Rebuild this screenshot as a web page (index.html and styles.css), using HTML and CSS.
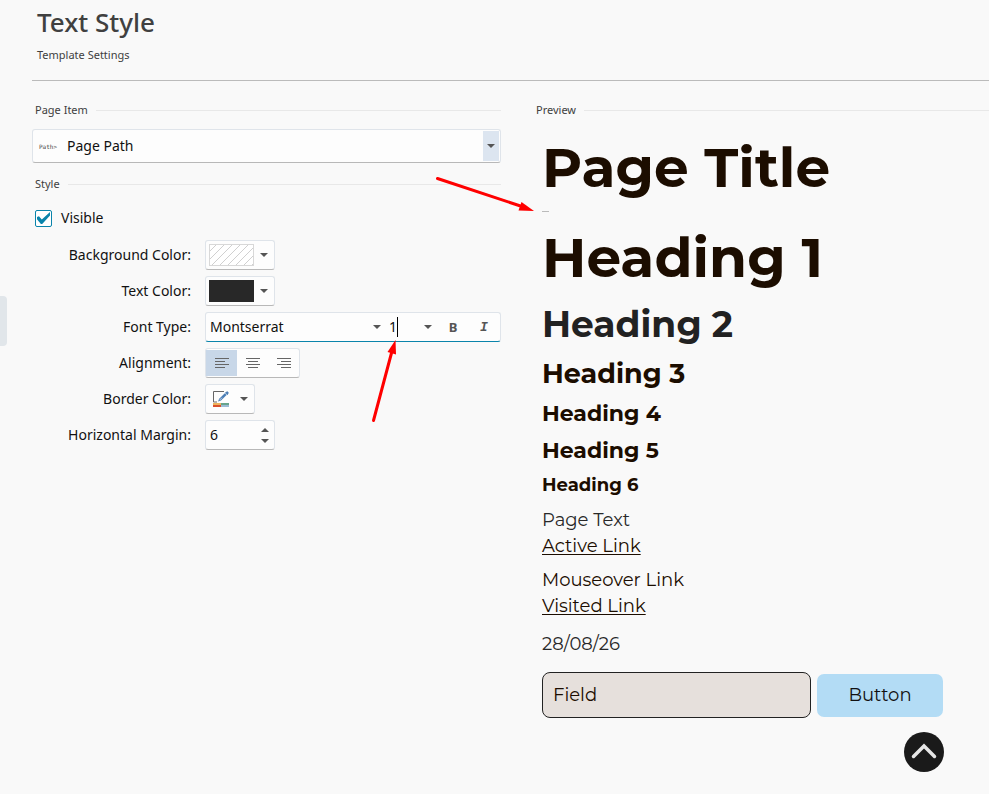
FILE: index.html
```html
<!DOCTYPE html>
<html lang="en">
<head>
    <meta charset="UTF-8">
    <meta name="viewport" content="width=device-width, initial-scale=1.0">
    <title>Text Style</title>
    <link rel="stylesheet" href="styles.css">
</head>
<body>
<button class="drawer-handle" type="button" aria-label="Open side panel"></button>
<header>
    <h1>Text Style</h1>
    <p>Template Settings</p>
</header>
<div class="container">
    <form class="settings">
        <h2 class="group-title"><label for="page-item">Page Item</label></h2>
        <div class="page-item">
            <span class="path-icon" aria-hidden="true">Path&gt;</span>
            <select id="page-item">
                <option>Page Path</option>
            </select>
            <span class="drop"><i class="caret"></i></span>
        </div>

        <h2 class="group-title">Style</h2>
        <label class="visible"><input type="checkbox" checked>Visible</label>

        <div class="fields">
            <label for="bg-color">Background Color:</label>
            <button id="bg-color" class="control color-button" type="button">
                <svg class="swatch" width="45" height="22" viewBox="0 0 45 22">
                    <defs>
                        <pattern id="hatch" width="8" height="8" patternUnits="userSpaceOnUse">
                            <path d="M-1 9L9 -1M-1 1L1 -1M7 9L9 7" stroke="#d0d0d0" stroke-width="1"/>
                        </pattern>
                    </defs>
                    <rect x="0.5" y="0.5" width="44" height="21" fill="#fff"/>
                    <rect x="0.5" y="0.5" width="44" height="21" fill="url(#hatch)" stroke="#d8d8d8"/>
                </svg>
                <i class="caret"></i>
            </button>

            <label for="text-color">Text Color:</label>
            <button id="text-color" class="control color-button" type="button">
                <span class="swatch dark"></span>
                <i class="caret"></i>
            </button>

            <label for="font-name">Font Type:</label>
            <div class="control font-box">
                <select id="font-name">
                    <option>Montserrat</option>
                </select>
                <i class="caret"></i>
                <span class="size-box">
                    <input id="font-size" type="text" value="1" aria-label="Font size">
                    <span class="cursor"></span>
                </span>
                <button class="sizes" type="button" aria-label="Font sizes"><i class="caret"></i></button>
                <button class="bold" type="button">B</button>
                <button class="italic" type="button">I</button>
            </div>

            <label for="align-left">Alignment:</label>
            <div class="control align-box">
                <button id="align-left" class="active" type="button" aria-label="Left">
                    <svg width="14" height="11"><path d="M0 .5H14M0 3.5H10M0 6.5H14M0 9.5H10"/></svg>
                </button>
                <button type="button" aria-label="Center">
                    <svg width="14" height="11"><path d="M0 .5H14M2 3.5H12M0 6.5H14M2 9.5H12"/></svg>
                </button>
                <button type="button" aria-label="Right">
                    <svg width="14" height="11"><path d="M0 .5H14M4 3.5H14M0 6.5H14M4 9.5H14"/></svg>
                </button>
            </div>

            <label for="border-color">Border Color:</label>
            <button id="border-color" class="control border-button" type="button">
                <svg width="17" height="17" viewBox="0 0 17 17">
                    <path d="M11 .5H.5V11H4" fill="none" stroke="#666"/>
                    <path d="M5 10.5L6.2 7.8L11.8 2.2L13.6 4L8 9.6Z" fill="#4a7db5"/>
                    <path d="M12.6 1.9L13.4 1H15V2.8L14.1 3.6Z" fill="#4a7db5" stroke="#4a7db5"/>
                    <path d="M6.5 9.2L9 6.7" stroke="#b8d0ea"/>
                    <rect y="12" width="8" height="2" fill="#edb35c"/>
                    <rect x="8" y="12" width="8" height="2" fill="#67a48d"/>
                    <rect y="14" width="8" height="2" fill="#d9502c"/>
                    <rect x="8" y="14" width="8" height="2" fill="#9bbbd3"/>
                </svg>
                <i class="caret"></i>
            </button>

            <label for="margin">Horizontal Margin:</label>
            <div class="control spin-box">
                <input id="margin" type="text" inputmode="numeric" value="6">
                <div class="spin">
                    <button type="button" aria-label="Increase"><i class="caret up"></i></button>
                    <button type="button" aria-label="Decrease"><i class="caret"></i></button>
                </div>
            </div>
        </div>
    </form>

    <section class="preview">
        <h2 class="group-title">Preview</h2>
        <div class="sample">
            <p class="page-title">Page Title</p>
            <div class="page-path"></div>
            <h1>Heading 1</h1>
            <h2>Heading 2</h2>
            <h3>Heading 3</h3>
            <h4>Heading 4</h4>
            <h5>Heading 5</h5>
            <h6>Heading 6</h6>
            <p class="text">Page Text</p>
            <p><a href="#">Active Link</a></p>
            <p class="spaced"><a class="hover" href="#">Mouseover Link</a></p>
            <p><a href="#">Visited Link</a></p>
            <p class="date">28/08/26</p>
            <div class="form-row">
                <input type="text" value="Field" aria-label="Field">
                <button type="button">Button</button>
            </div>
            <button class="to-top" type="button" aria-label="Back to top">
                <svg width="40" height="40"><path d="M9.500 24.500L20 14L30.500 24.500" fill="none" stroke="#e6e6e6" stroke-width="3.500" stroke-linecap="round"/></svg>
            </button>
        </div>
    </section>
</div>

<!-- red pointer arrows -->
<svg class="arrows" width="540" height="430" viewBox="0 0 540 430">
    <g stroke="#f00" stroke-width="3" stroke-linecap="round">
        <path d="M437.500 178.500L522 206.500"/>
        <path d="M373.500 420.500L391.500 353"/>
    </g>
    <g fill="#f00">
        <path d="M534 211L518.500 210.500L521.500 202Z"/>
        <path d="M395.500 340L396 354.500L387.500 352Z"/>
    </g>
</svg>
</body>
</html>
```
FILE: styles.css
```css
* {
    box-sizing: border-box;
}

body {
    margin: 0;
    min-height: 100vh;
    position: relative;
    overflow-x: hidden;
    background-color: #f9f9f9;
    color: #111;
    font-family: "Segoe UI", "Noto Sans", sans-serif;
    font-size: 14px;
}

h1, h2, h3, h4, h5, h6, p {
    margin: 0;
}

button, input, select {
    font: inherit;
    color: inherit;
    margin: 0;
    padding: 0;
    border: none;
    background: none;
    outline: none;
    appearance: none;
}

.drawer-handle {
    position: absolute;
    left: 0;
    top: 296px;
    width: 7px;
    height: 50px;
    background-color: #e1e6ea;
    border-radius: 0 4px 4px 0;
}

header {
    margin-left: 32px;
    padding: 4px 5px 16px;
    border-bottom: 1px solid #bbb;
    color: #404040;
}

header h1 {
    font-size: 26px;
    font-weight: 500;
    line-height: 36px;
}

header p {
    margin-top: 6px;
    font-size: 11px;
    line-height: 18px;
}

.container {
    display: grid;
    grid-template-columns: 469px 1fr;
    column-gap: 35px;
    padding: 20px 0 0 32px;
}

.group-title {
    display: flex;
    align-items: center;
    gap: 8px;
    font-size: 11px;
    font-weight: 400;
    line-height: 18px;
    color: #404040;
}

.group-title::after {
    content: "";
    flex: 1;
    height: 1px;
    background-color: #e8e8e8;
}

.settings .group-title {
    padding-left: 3px;
}

.caret {
    flex: none;
    width: 0;
    height: 0;
    border-left: 4px solid transparent;
    border-right: 4px solid transparent;
    border-top: 4px solid #555;
}

.caret.up {
    border-top: none;
    border-bottom: 4px solid #555;
}

.control,
.page-item {
    display: flex;
    align-items: center;
    height: 30px;
    background-color: #fdfdfd;
    border: 1px solid #dfe4ea;
    border-bottom-color: #b8b8b8;
    border-radius: 3px;
}

/* page item */
.page-item {
    height: 34px;
    margin: 10px 0 12px;
    padding: 1px;
    position: relative;
}

.path-icon {
    position: absolute;
    left: 6px;
    font-family: "DejaVu Sans Mono", monospace;
    font-size: 6px;
    color: #444;
}

.page-item select {
    flex: 1;
    height: 100%;
    padding: 0 0 2px 33px;
}

.drop {
    display: flex;
    align-items: center;
    justify-content: center;
    width: 16px;
    height: 100%;
    background-color: #dce5f0;
    pointer-events: none;
}

.visible {
    display: flex;
    align-items: center;
    gap: 9px;
    width: max-content;
    margin: 13px 0 10px 3px;
    line-height: 24px;
}

.visible input {
    display: grid;
    place-items: center;
    width: 17px;
    height: 17px;
    border: 1px solid #0a84ab;
    border-radius: 2px;
    background-color: #fff;
}

.visible input:checked::before {
    content: "";
    width: 13px;
    height: 12px;
    background-color: #0a84ab;
    clip-path: polygon(0 42%, 15% 36%, 37% 62%, 100% 0, 100% 30%, 40% 100%, 30% 100%, 0 60%);
}

/* label / control rows */
.fields {
    display: grid;
    grid-template-columns: 159px 1fr;
    column-gap: 14px;
    row-gap: 6px;
    align-items: center;
    justify-items: start;
}

.fields > label {
    justify-self: end;
    padding-bottom: 2px;
}

.color-button {
    width: 70px;
    padding-left: 3px;
    gap: 6px;
}

.swatch {
    width: 45px;
    height: 22px;
}

.swatch.dark {
    background-color: #282828;
}

.font-box {
    width: 100%;
    border-bottom-color: #0a84ab;
}

.font-box select {
    flex: 1;
    min-width: 0;
    height: 100%;
    padding: 0 0 2px 4px;
}

.size-box {
    display: flex;
    align-items: center;
    width: 37px;
    padding-left: 8px;
    position: relative;
}

.size-box input {
    width: 100%;
    padding-bottom: 2px;
}

.cursor {
    position: absolute;
    left: 16px;
    width: 1px;
    height: 20px;
    background-color: #000;
}

.font-box button {
    display: flex;
    align-items: center;
    justify-content: center;
    height: 100%;
    color: #555;
    font-size: 13px;
}

.font-box .sizes {
    width: 20px;
}

.font-box .bold {
    width: 30px;
    font-weight: 700;
}

.font-box .italic {
    width: 32px;
    font-family: "Liberation Mono", monospace;
    font-style: italic;
    font-weight: 700;
}

.align-box {
    padding: 1px 0;
}

.align-box button {
    display: flex;
    align-items: center;
    justify-content: center;
    width: 31px;
    height: 100%;
}

.align-box .active {
    background-color: #c8d7e8;
}

.align-box path {
    stroke: #666;
}

.border-button {
    width: 50px;
    padding-left: 7px;
    gap: 10px;
}

.spin-box {
    width: 70px;
    padding: 0 5px 0 4px;
}

.spin-box > input {
    flex: 1;
    min-width: 0;
    padding-bottom: 2px;
}

.spin {
    display: flex;
    flex-direction: column;
    gap: 7px;
}

.spin button {
    display: flex;
}

/* preview */
.sample {
    padding: 16px 0 20px 6px;
    color: #1c0d00;
    font-family: Montserrat, Inter, sans-serif;
    font-size: 18px;
    line-height: 26px;
}

.sample .page-title,
.sample h1 {
    font-size: 55px;
    font-weight: 700;
    line-height: 66px;
}

.page-path {
    width: 7px;
    height: 1px;
    margin: 10px 0 13px;
    background-color: #bbb;
}

.sample h2 {
    margin-top: 10px;
    font-size: 36px;
    line-height: 46px;
    color: #222;
}

.sample h3 {
    margin-top: 10px;
    font-size: 27px;
    line-height: 34px;
}

.sample h4,
.sample h5 {
    margin-top: 9px;
    font-size: 22px;
    line-height: 28px;
}

.sample h6 {
    margin-top: 8px;
    font-size: 18px;
    line-height: 24px;
}

.sample .text {
    margin-top: 11px;
    line-height: 25px;
    color: #282828;
}

.sample a {
    color: inherit;
    text-underline-offset: 2px;
    text-decoration-thickness: 1px;
    text-decoration-skip-ink: none;
}

.sample .hover {
    text-decoration: none;
}

.sample .spaced {
    margin-top: 8px;
}

.sample .date {
    margin-top: 12px;
    color: #282828;
}

.form-row {
    display: flex;
    align-items: center;
    gap: 6px;
    margin-top: 15px;
}

.form-row input {
    width: 269px;
    height: 46px;
    padding: 0 10px;
    background-color: #e6e0dc;
    border: 1px solid #222;
    border-radius: 8px;
}

.form-row button {
    width: 126px;
    height: 43px;
    background-color: #b3dcf5;
    border-radius: 7px;
    color: #111;
}

.to-top {
    display: flex;
    width: 40px;
    height: 40px;
    margin: 14px 0 0 362px;
    border-radius: 50%;
    background-color: #1a1a1a;
}

.arrows {
    position: absolute;
    left: 0;
    top: 0;
    pointer-events: none;
}
```
